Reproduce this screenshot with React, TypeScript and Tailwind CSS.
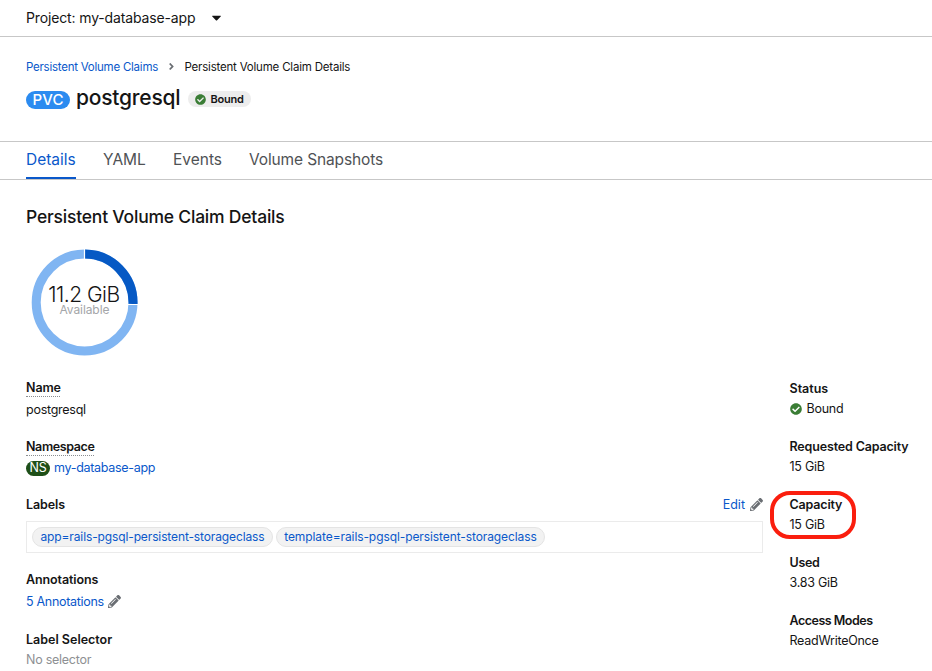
import type { ReactNode } from "react";
import { FaAngleRight, FaCaretDown, FaCheckCircle, FaPencilAlt } from "react-icons/fa";

function Header() {
  return (
    <header className="flex h-[37px] items-center border-b border-[#c7c7c7] pl-[26px]">
      <span className="text-[14px] leading-5 tracking-[-0.14px]">Project: my-database-app</span>
      <FaCaretDown className="mb-px ml-[14px] h-[15px] w-[15px]" />
    </header>
  );
}

function Title() {
  return (
    <div className="h-[104px] pl-[26px] pt-5">
      <nav className="flex h-5 items-center text-[11.5px]">
        <a className="mt-[2px] w-[133px] whitespace-nowrap tracking-[-0.24px] text-[#0a58ca]">Persistent Volume Claims</a>
        <FaAngleRight className="mb-px ml-[7px] h-[11px] w-[11px] text-[#6a6e73]" />
        <span className="ml-[7.5px] mt-[2px] whitespace-nowrap tracking-[-0.2px]">Persistent Volume Claim Details</span>
      </nav>
      <div className="mt-[9px] flex h-[26px] items-center">
        <span className="mt-[2px] flex h-[18px] w-11 items-center justify-center rounded-full bg-[#2b8bf0] text-[15px] font-medium tracking-[0.1px] text-white">
          PVC
        </span>
        <h1 className="mb-[2px] ml-[6px] w-[106px] text-[21px] font-medium leading-[26px] tracking-[-0.22px]">postgresql</h1>
        <span className="ml-[6px] flex h-4 w-[63px] items-center rounded-full bg-[#ededed] pl-[7px] text-[11px] font-semibold tracking-[-0.2px]">
          <FaCheckCircle className="mr-[4.5px] h-[11px] w-[11px] text-[#3a7d35]" />
          Bound
        </span>
      </div>
    </div>
  );
}

function Tabs() {
  return (
    <nav className="flex h-[39px] gap-[27px] border-y border-[#c7c7c7] pl-[26px] text-[15.5px] leading-[36px] text-[#4f5255]">
      <a className="w-[50px] border-b-2 border-[#0a58ca] text-[#0a58ca]">Details</a>
      <a className="w-[43px]">YAML</a>
      <a className="w-[49px]">Events</a>
      <a className="whitespace-nowrap tracking-[-0.13px]">Volume Snapshots</a>
    </nav>
  );
}

function CapacityDonut() {
  return (
    <svg className="mt-[18px] h-[110px] w-[117px]" viewBox="0 0 117 110">
      <circle cx="58.6" cy="55.5" r="48.4" fill="none" stroke="#80b5f2" strokeWidth="9" />
      <path d="M58.6 7.1A48.4 48.4 0 0 1 107 57" fill="none" stroke="#0659c4" strokeWidth="9" />
      <path d="M58.5 1v12M102 57.5h12" stroke="white" strokeWidth="1.2" />
      <text x="57.9" y="55" textAnchor="middle" className="fill-[#151515] text-[21px] font-light tracking-[-0.5px]">
        11.2 GiB
      </text>
      <text x="58.4" y="67" textAnchor="middle" className="fill-[#a4a6a9] text-[12px] tracking-[-0.08px]">
        Available
      </text>
    </svg>
  );
}

function Term({ children, className = "" }: { children: ReactNode; className?: string }) {
  return <dt className={`h-5 whitespace-nowrap font-semibold ${className}`}>{children}</dt>;
}

function Value({ children, className = "" }: { children: ReactNode; className?: string }) {
  return <dd className={`flex h-5 items-center whitespace-nowrap tracking-[-0.26px] ${className}`}>{children}</dd>;
}

function Chip({ children, className }: { children: ReactNode; className: string }) {
  return (
    <span
      className={`flex h-5 items-center justify-center whitespace-nowrap rounded-full border border-[#e4e4e4] bg-[#f2f2f2] text-[12px] text-[#0a58ca] ${className}`}
    >
      {children}
    </span>
  );
}

function Pencil() {
  return <FaPencilAlt className="mb-[2px] h-[13px] w-[13px] text-[#6a6e73]" />;
}

function LeftColumn() {
  return (
    <dl className="w-[737px]">
      <Term>
        <span className="inline-block h-[19px] w-[34px] border-b border-dotted border-[#8a8d90] tracking-[-0.1px]">Name</span>
      </Term>
      <Value className="mt-[2px]">postgresql</Value>

      <Term className="mt-[17px] tracking-[-0.38px]">
        <span className="inline-block h-[19px] w-[68px] border-b border-dotted border-[#8a8d90]">Namespace</span>
      </Term>
      <Value className="mt-px">
        <span className="mr-1 flex h-[15px] w-6 items-center justify-center rounded-full bg-[#1e4f18] text-white">
          NS
        </span>
        <a className="tracking-[-0.3px] text-[#0a58ca]">my-database-app</a>
      </Value>

      <Term className="mt-[17px] flex items-center justify-between">
        <span className="tracking-[-0.1px]">Labels</span>
        <span className="flex items-center gap-[5px] font-normal text-[#0a58ca]">
          Edit
          <Pencil />
        </span>
      </Term>
      <dd className="mt-[6px] flex h-8 items-center gap-[3px] border border-[#ebebeb] pl-[5px]">
        <Chip className="w-[241px] tracking-[-0.12px]">app=rails-pgsql-persistent-storageclass</Chip>
        <Chip className="w-[269px] tracking-[-0.09px]">template=rails-pgsql-persistent-storageclass</Chip>
      </dd>

      <Term className="mt-[17px] tracking-[-0.1px]">Annotations</Term>
      <Value className="mt-[2px]">
        <a className="mr-1 tracking-[-0.3px] text-[#0a58ca]">5 Annotations</a>
        <Pencil />
      </Value>

      <Term className="mt-[18px]">Label Selector</Term>
      <Value className="text-[#8e9093]">No selector</Value>
    </dl>
  );
}

function RightColumn() {
  return (
    <dl className="mt-px flex flex-col gap-[18px]">
      <div>
        <Term>Status</Term>
        <Value>
          <FaCheckCircle className="mr-[5px] h-3 w-3 text-[#3a7d35]" />
          Bound
        </Value>
      </div>
      <div>
        <Term className="tracking-[-0.16px]">Requested Capacity</Term>
        <Value>15 GiB</Value>
      </div>
      <div className="relative">
        <Term className="tracking-[-0.16px]">Capacity</Term>
        <Value>15 GiB</Value>
        <div className="absolute left-[-19.5px] top-[-4px] h-12 w-[86px] rounded-[20px] border-4 border-[#fa1e0e]" />
      </div>
      <div>
        <Term className="tracking-[-0.3px]">Used</Term>
        <Value className="tracking-[-0.16px]">3.83 GiB</Value>
      </div>
      <div>
        <Term className="tracking-[-0.49px]">Access Modes</Term>
        <Value>ReadWriteOnce</Value>
      </div>
    </dl>
  );
}

export default function App() {
  return (
    <div className="h-[671px] w-[932px] overflow-hidden bg-white font-[Inter,sans-serif] text-[#151515]">
      <Header />
      <Title />
      <Tabs />
      <main className="pl-[26px] pt-[25px]">
        <h2 className="h-6 text-[17.5px] font-medium leading-6 tracking-[-0.21px]">Persistent Volume Claim Details</h2>
        <CapacityDonut />
        <div className="mt-[21px] flex gap-[26.5px] text-[12.5px] leading-5">
          <LeftColumn />
          <RightColumn />
        </div>
      </main>
    </div>
  );
}
